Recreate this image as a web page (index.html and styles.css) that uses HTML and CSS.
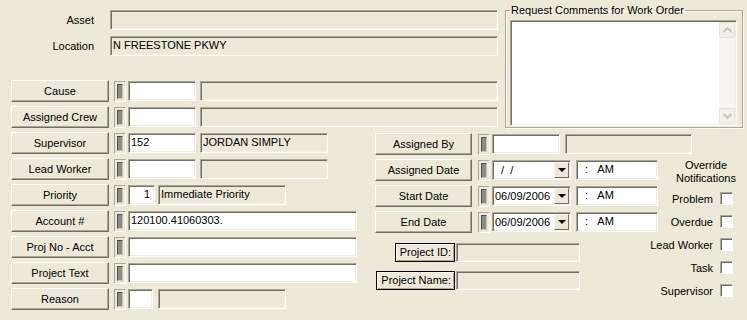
FILE: index.html
```html
<!DOCTYPE html>
<html>
<head>
    <title>Work Order Assignment</title>
    <link rel="stylesheet" href="styles.css">
</head>
<body>
<div class="form">
    <!-- Asset / location and request comments -->
    <div class="top">
        <div class="top-left">
            <div class="info-row">
                <span class="info-label">Asset</span>
                <div class="field disabled info-field"></div>
            </div>
            <div class="info-row">
                <span class="info-label">Location</span>
                <div class="field disabled info-field">N FREESTONE PKWY</div>
            </div>
            <div class="rows lookup-rows">
                <div class="row">
                    <button class="btn">Cause</button>
                    <span class="ind"><span></span></span>
                    <div class="field code"></div>
                    <div class="field disabled desc-long"></div>
                </div>
                <div class="row">
                    <button class="btn">Assigned Crew</button>
                    <span class="ind"><span></span></span>
                    <div class="field code"></div>
                    <div class="field disabled desc-long"></div>
                </div>
            </div>
        </div>
        <fieldset class="comments">
            <legend>Request Comments for Work Order</legend>
            <div class="memo">
                <div class="memo-text"></div>
                <div class="vscroll">
                    <span class="sb-btn">
                        <svg width="9" height="6" viewBox="0 0 9 6"><path d="M0.5 5 L4.5 1 L8.5 5" fill="none" stroke="#c8c6b8" stroke-width="2"/></svg>
                    </span>
                    <span class="sb-btn">
                        <svg width="9" height="6" viewBox="0 0 9 6"><path d="M0.5 1 L4.5 5 L8.5 1" fill="none" stroke="#c8c6b8" stroke-width="2"/></svg>
                    </span>
                </div>
            </div>
        </fieldset>
    </div>

    <div class="bottom">
        <!-- Left lookup rows -->
        <div class="rows left-rows">
            <div class="row">
                <button class="btn">Supervisor</button>
                <span class="ind"><span></span></span>
                <div class="field code">152</div>
                <div class="field disabled desc">JORDAN SIMPLY</div>
            </div>
            <div class="row">
                <button class="btn">Lead Worker</button>
                <span class="ind"><span></span></span>
                <div class="field code"></div>
                <div class="field disabled desc"></div>
            </div>
            <div class="row">
                <button class="btn">Priority</button>
                <span class="ind"><span></span></span>
                <div class="field short num">1</div>
                <div class="field disabled desc">Immediate Priority</div>
            </div>
            <div class="row">
                <button class="btn">Account #</button>
                <span class="ind"><span></span></span>
                <div class="field long">120100.41060303.</div>
            </div>
            <div class="row">
                <button class="btn">Proj No - Acct</button>
                <span class="ind"><span></span></span>
                <div class="field long"></div>
            </div>
            <div class="row">
                <button class="btn">Project Text</button>
                <span class="ind"><span></span></span>
                <div class="field long"></div>
            </div>
            <div class="row">
                <button class="btn">Reason</button>
                <span class="ind"><span></span></span>
                <div class="field tiny"></div>
                <div class="field disabled desc"></div>
            </div>
        </div>

        <!-- Assignment and dates -->
        <div class="mid">
            <div class="row">
                <button class="btn btn-mid">Assigned By</button>
                <span class="ind"><span></span></span>
                <div class="field code"></div>
                <div class="field disabled by-desc"></div>
            </div>
            <div class="mid-lower">
                <div class="rows dates">
                    <div class="row">
                        <button class="btn btn-mid">Assigned Date</button>
                        <span class="ind"><span></span></span>
                        <div class="combo">
                            <span class="combo-text">&nbsp;&nbsp;/&nbsp;&nbsp;/</span>
                            <span class="combo-btn"><span class="arrow"></span></span>
                        </div>
                        <div class="field time">&nbsp;&nbsp;:&nbsp;&nbsp;&nbsp;AM</div>
                    </div>
                    <div class="row">
                        <button class="btn btn-mid">Start Date</button>
                        <span class="ind"><span></span></span>
                        <div class="combo">
                            <span class="combo-text">06/09/2006</span>
                            <span class="combo-btn"><span class="arrow"></span></span>
                        </div>
                        <div class="field time">&nbsp;&nbsp;:&nbsp;&nbsp;&nbsp;AM</div>
                    </div>
                    <div class="row">
                        <button class="btn btn-mid">End Date</button>
                        <span class="ind"><span></span></span>
                        <div class="combo">
                            <span class="combo-text">06/09/2006</span>
                            <span class="combo-btn"><span class="arrow"></span></span>
                        </div>
                        <div class="field time">&nbsp;&nbsp;:&nbsp;&nbsp;&nbsp;AM</div>
                    </div>
                    <div class="project-rows">
                        <div class="proj-row">
                            <div class="proj-cell"><span class="proj-label">Project ID:</span></div>
                            <div class="field disabled proj-field"></div>
                        </div>
                        <div class="proj-row">
                            <div class="proj-cell"><span class="proj-label">Project Name:</span></div>
                            <div class="field disabled proj-field"></div>
                        </div>
                    </div>
                </div>

                <!-- Override notifications -->
                <div class="notify">
                    <div class="notify-title">Override<br>Notifications</div>
                    <div class="notify-list">
                        <label class="check-row">Problem <span class="check"></span></label>
                        <label class="check-row">Overdue <span class="check"></span></label>
                        <label class="check-row">Lead Worker <span class="check"></span></label>
                        <label class="check-row">Task <span class="check"></span></label>
                        <label class="check-row">Supervisor <span class="check"></span></label>
                    </div>
                </div>
            </div>
        </div>
    </div>
</div>
</body>
</html>
```

FILE: styles.css
```css
/* Page */
body {
    margin: 0;
    background-color: #ece9d8; /* XP dialog face */
    font-family: "Liberation Sans", Arial, sans-serif;
    font-size: 11px;
    color: #000;
    overflow: hidden;
}

.form {
    padding-left: 11px;
}

/* Top part */
.top {
    display: flex;
    padding-top: 4px;
    height: 124px;
}

.top-left {
    width: 487px;
    padding-top: 6px;
}

.info-row {
    display: flex;
    align-items: center;
    height: 20px;
    margin-bottom: 6px;
}

.info-label {
    width: 83px;
    margin-right: 16px;
    text-align: right;
}

.info-field {
    width: 388px;
}

.lookup-rows {
    padding-top: 18px; /* plus the 6px row margin above */
}

/* Rows of lookup buttons */
.rows {
    display: flex;
    flex-direction: column;
    gap: 4px;
}

.row {
    display: flex;
    align-items: center;
    height: 22px;
}

.btn {
    width: 98px;
    height: 22px;
    margin: 0 5px 0 0;
    padding: 0;
    box-sizing: border-box;
    font-family: inherit;
    font-size: 11px;
    color: #000;
    background-color: #ece9d8;
    border: 1px solid;
    border-color: #fff #716f64 #716f64 #fff;
    box-shadow: inset -1px -1px #aca899;
}

.btn-mid {
    width: 97px;
    margin-right: 6px;
}

/* little lock indicator left of each field */
.ind {
    display: block;
    width: 12px;
    height: 21px;
    box-sizing: border-box;
    margin-right: 2px;
    padding: 2px;
    border: 1px solid;
    border-color: #aca899 #fff #fff #aca899;
}

.ind span {
    display: block;
    height: 100%;
    box-sizing: border-box;
    background-color: #8a8a86;
    border: 1px solid;
    border-color: #55544c #c9c7bb #c9c7bb #55544c;
}

/* Text boxes */
.field {
    height: 20px;
    box-sizing: border-box;
    padding: 0 2px;
    line-height: 16px;
    white-space: pre;
    overflow: hidden;
    background-color: #fff;
    border: 1px solid;
    border-color: #aca899 #fff #fff #aca899;
    box-shadow: inset 1px 1px #716f64, inset -1px -1px #f1efe2;
}

.field.disabled {
    background-color: #ece9d8;
}

.code {
    width: 68px;
    margin-right: 4px;
}

.desc-long {
    width: 298px;
}

.desc {
    width: 128px;
}

.short {
    width: 27px;
    margin-right: 3px;
}

.tiny {
    width: 25px;
    margin-right: 5px;
}

.num {
    text-align: right;
    padding-right: 4px;
}

.long {
    width: 229px;
}

/* Request comments group box */
.comments {
    width: 238px;
    box-sizing: border-box;
    margin: 0 0 0 7px;
    padding: 3px 5px 1px 4px;
    border: 1px solid #aca899;
    box-shadow: inset 1px 1px #fff, 1px 1px #fff;
}

.comments legend {
    padding: 0 1px;
    line-height: 13px;
}

.memo {
    display: flex;
    height: 106px;
    box-sizing: border-box;
    background-color: #fff;
    border: 1px solid;
    border-color: #aca899 #fff #fff #aca899;
    box-shadow: inset 1px 1px #716f64, inset -1px -1px #f1efe2;
    padding: 1px;
}

.memo-text {
    flex: 1;
}

.vscroll {
    width: 16px;
    display: flex;
    flex-direction: column;
    justify-content: space-between;
    background-color: #f6f5ef;
}

.sb-btn {
    display: flex;
    align-items: center;
    justify-content: center;
    height: 16px;
    box-sizing: border-box;
    border: 1px solid #e6e4d8;
    border-radius: 2px;
    background-color: #f2f1e9;
}

/* Bottom part */
.bottom {
    display: flex;
    margin-top: 4px;
}

.left-rows {
    width: 346px;
}

.mid {
    margin-left: 18px;
    padding-top: 1px;
}

.by-desc {
    width: 127px;
    margin-left: 1px;
}

.mid-lower {
    display: flex;
    margin-top: 4px;
}

.dates {
    width: 283px;
}

/* Date combo */
.combo {
    display: flex;
    width: 79px;
    height: 20px;
    box-sizing: border-box;
    margin-right: 5px;
    padding: 1px;
    background-color: #fff;
    border: 1px solid;
    border-color: #aca899 #fff #fff #aca899;
    box-shadow: inset 1px 1px #716f64, inset -1px -1px #f1efe2;
}

.combo-text {
    flex: 1;
    padding-left: 1px;
    line-height: 16px;
}

.combo-btn {
    display: flex;
    align-items: center;
    justify-content: center;
    width: 15px;
    box-sizing: border-box;
    background-color: #ece9d8;
    border: 1px solid;
    border-color: #f5f4ee #716f64 #716f64 #f5f4ee;
}

.arrow {
    width: 0;
    height: 0;
    border-left: 4px solid transparent;
    border-right: 4px solid transparent;
    border-top: 4px solid #000;
}

.time {
    width: 82px;
}

/* Project id / name */
.project-rows {
    margin-top: 6px;
}

.proj-row {
    display: flex;
    margin-bottom: 9px;
}

.proj-cell {
    width: 80px;
    display: flex;
    justify-content: flex-end;
}

.proj-label {
    height: 19px;
    box-sizing: border-box;
    padding: 0 3px 0 4px;
    line-height: 17px;
    border: 1px solid #000;
    box-shadow: inset 1px 1px #fff, inset -1px -1px #aca899;
}

.proj-field {
    width: 124px;
    height: 19px;
    margin-left: 1px;
}

/* Override notifications */
.notify {
    width: 88px;
}

.notify-title {
    padding-left: 8px;
    text-align: center;
    line-height: 13px;
}

.notify-list {
    display: flex;
    flex-direction: column;
    gap: 10px;
    margin-top: 7px;
}

.check-row {
    display: flex;
    justify-content: flex-end;
    align-items: center;
    height: 13px;
    padding-right: 13px;
    white-space: nowrap;
}

.check {
    display: block;
    flex: none;
    width: 13px;
    height: 13px;
    box-sizing: border-box;
    margin-left: 7px;
    background-color: #fff;
    border: 1px solid;
    border-color: #aca899 #fff #fff #aca899;
    box-shadow: inset 1px 1px #716f64;
}
```
